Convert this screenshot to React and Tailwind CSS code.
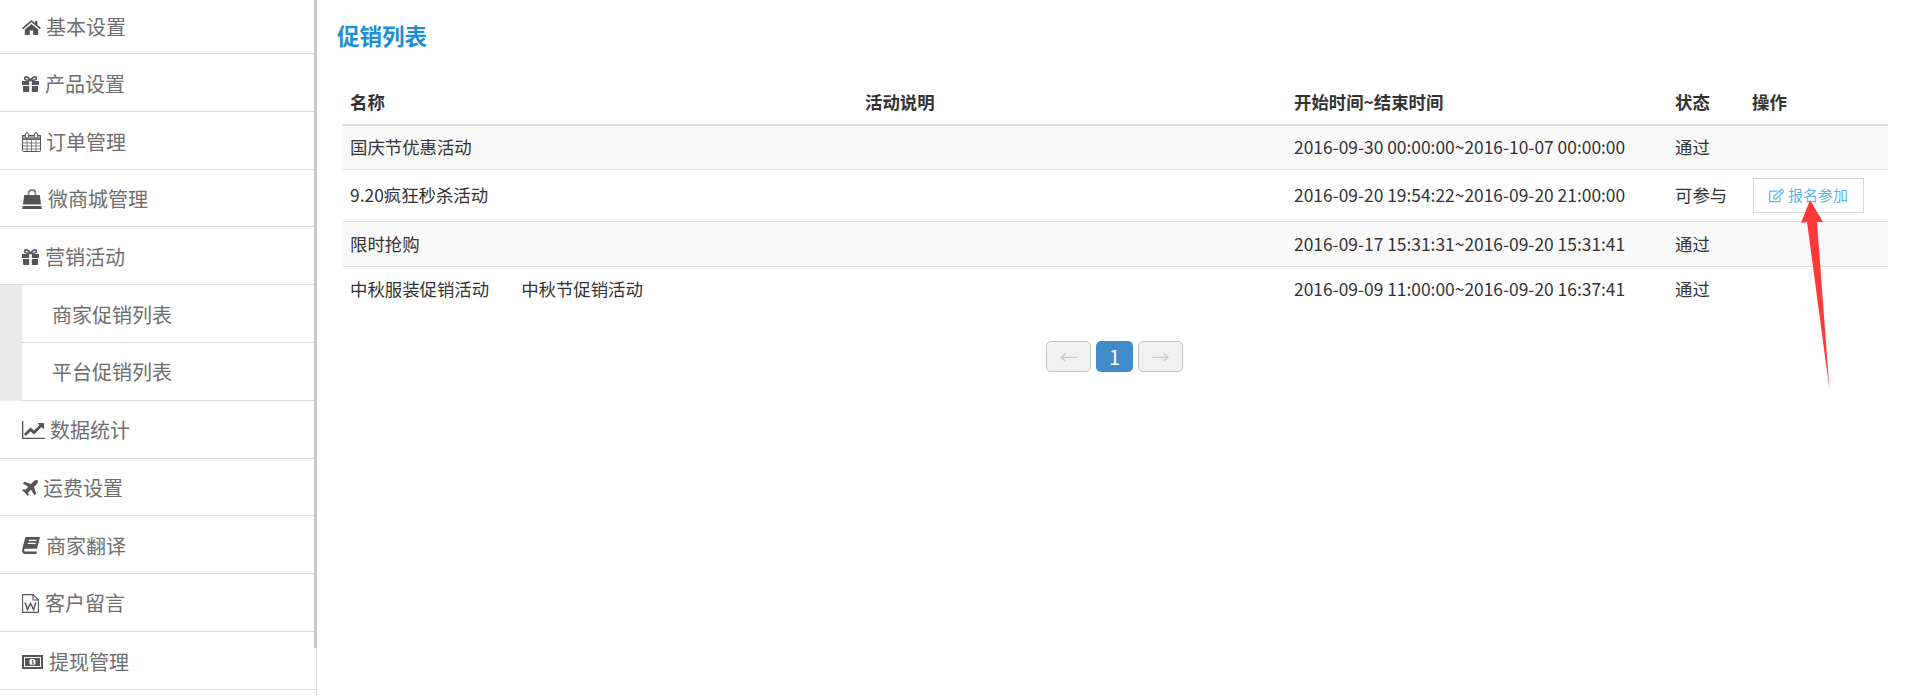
import React from 'react';
import { FaRegEdit } from 'react-icons/fa';

const F = { fontFamily: '"Noto Sans CJK SC", "Noto Sans", sans-serif' };

const HomeIcon = () => (
  <svg width="19" height="15" viewBox="0 0 19 15" fill="currentColor">
    <path d="M9.5 0 L13 2.9 V1 H15.4 V4.9 L19 7.9 L17.9 9.2 L9.5 2.3 L1.1 9.2 L0 7.9 Z" />
    <path d="M9.5 3.9 L16.2 9.4 V15 H11.2 V10.4 H7.8 V15 H2.8 V9.4 Z" />
  </svg>
);
const GiftIcon = () => (
  <svg width="17" height="16" viewBox="0 0 17 16">
    <path d="M0 5 H7.2 V9 H0 Z M9.8 5 H17 V9 H9.8 Z M1 10 H7.2 V16 H2 Q1 16 1 15 Z M9.8 10 H16 V15 Q16 16 15 16 H9.8 Z" fill="currentColor" />
    <path d="M8.5 4.2 C6 0 2.6 0.2 2.6 2.4 C2.6 4.2 5.5 4.2 8.5 4.2 C11.5 4.2 14.4 4.2 14.4 2.4 C14.4 0.2 11 0 8.5 4.2 Z" fill="none" stroke="currentColor" strokeWidth="1.6" />
  </svg>
);
const CalendarIcon = () => (
  <svg width="19" height="20" viewBox="0 0 19 20" fill="none" stroke="currentColor" strokeWidth="1">
    <rect x="0.5" y="3.5" width="18" height="16" rx="1" />
    <path d="M1 7.5 H18 M1 11 H18 M1 14 H18 M1 17 H18" strokeOpacity="0.7" />
    <path d="M5 8 V19 M9.5 8 V19 M14 8 V19" strokeOpacity="0.7" />
    <rect x="0.5" y="3.5" width="18" height="3.5" fill="currentColor" fillOpacity="0.55" />
    <rect x="3.5" y="0.7" width="3" height="5.5" rx="1.5" fill="#ffffff" />
    <rect x="12.5" y="0.7" width="3" height="5.5" rx="1.5" fill="#ffffff" />
  </svg>
);
const BagIcon = () => (
  <svg width="20" height="20" viewBox="0 0 20 20">
    <path d="M2.2 6 H17.8 L19 15.5 H1 Z M0.8 17 H19.2 L20 20 H0 Z" fill="currentColor" />
    <path d="M6.5 9 V4.5 C6.5 0 13.5 0 13.5 4.5 V9" fill="none" stroke="currentColor" strokeWidth="1.6" />
    <path d="M6.5 6 V4.5 C6.5 1 13.5 1 13.5 4.5 V6" fill="none" stroke="#ffffff" strokeWidth="0.5" />
  </svg>
);
const ChartIcon = () => (
  <svg width="23" height="18" viewBox="0 0 23 18">
    <path d="M0 0 H1.3 V16.7 H23 V18 H0 Z" fill="currentColor" />
    <path d="M3 14 L8.5 8.5 L12 11.5 L19 4.5" fill="none" stroke="currentColor" strokeWidth="2.8" />
    <path d="M15.5 2 H22 V8.5 Z" fill="currentColor" />
  </svg>
);
const PlaneIcon = () => (
  <svg width="16" height="16" viewBox="0 0 16 16" fill="currentColor">
    <path d="M15.6 0.4 C14.6 -0.4 12.6 0.4 11.4 1.6 L9 4 L2.4 1.8 L0.8 3.4 L6.2 6.8 L3.6 9.6 L1.2 9.2 L0 10.4 L3 12.6 L5.4 16 L6.6 14.8 L6.2 12.4 L9 9.8 L12.6 15.2 L14.2 13.6 L12 7 L14.4 4.6 C15.6 3.4 16.4 1.4 15.6 0.4 Z" />
  </svg>
);
const BookIcon = () => (
  <svg width="18" height="17" viewBox="0 0 18 17">
    <path d="M4.5 0 H18 L15 11.8 H3.2 C1.8 11.8 1.8 14.6 3.4 14.6 H15 L14.4 17 H2.8 C0.5 17 -0.4 14.6 0.2 12.4 L3 1.5 C3.2 0.6 3.8 0 4.5 0 Z" fill="currentColor" />
    <path d="M6.6 3.4 H14.6 M5.8 6.4 H13.8" stroke="#ffffff" strokeWidth="1.2" />
  </svg>
);
const WordIcon = () => (
  <svg width="17" height="19" viewBox="0 0 17 19" fill="none" stroke="currentColor" strokeWidth="1.1">
    <path d="M0.6 0.6 H11 L16.4 6 V18.4 H0.6 Z" />
    <path d="M11 0.6 V6 H16.4" />
    <path d="M3.2 8.5 L5.4 15.5 L8.5 9.5 L11.6 15.5 L13.8 8.5" strokeWidth="1.5" />
  </svg>
);
const MoneyIcon = () => (
  <svg width="21" height="14" viewBox="0 0 21 14">
    <path fillRule="evenodd" d="M0 0 H21 V14 H0 Z M2 2 V12 H19 V2 Z" fill="currentColor" />
    <path fillRule="evenodd" d="M3 3 H18 V11 H3 Z M10.5 3.8 A3.2 3.2 0 1 0 10.5 10.2 A3.2 3.2 0 1 0 10.5 3.8 Z" fill="currentColor" />
    <path d="M10.8 5 V9 M9.6 9 H12 M9.8 6 L10.8 5" stroke="currentColor" strokeWidth="1" fill="none" />
  </svg>
);

const menu = [
  { label: '基本设置', Icon: HomeIcon, ml: 'ml-[5px]', pt: 'pt-[1px]' },
  { label: '产品设置', Icon: GiftIcon, ml: 'ml-[6px]', pt: 'pt-[3px]' },
  { label: '订单管理', Icon: CalendarIcon, ml: 'ml-[5px]', pt: 'pt-[3px]' },
  { label: '微商城管理', Icon: BagIcon, ml: 'ml-[6px]', pt: 'pt-[3px]' },
  { label: '营销活动', Icon: GiftIcon, ml: 'ml-[6px]', pt: 'pt-[2px]' },
  { label: '数据统计', Icon: ChartIcon, ml: 'ml-[5px]', pt: 'pt-[2px]' },
  { label: '运费设置', Icon: PlaneIcon, ml: 'ml-[5px]', pt: 'pt-[3px]' },
  { label: '商家翻译', Icon: BookIcon, ml: 'ml-[6px]', pt: 'pt-[2px]' },
  { label: '客户留言', Icon: WordIcon, ml: 'ml-[6px]', pt: 'pt-[1px]' },
  { label: '提现管理', Icon: MoneyIcon, ml: 'ml-[6px]', pt: 'pt-[3px]' },
];
menu[4].open = true;

const rows = [
  { name: ['国庆节优惠活动'], time: '2016-09-30 00:00:00~2016-10-07 00:00:00', status: '通过', h: 'h-[44px]', border: true, striped: true },
  { name: ['9.20疯狂秒杀活动'], time: '2016-09-20 19:54:22~2016-09-20 21:00:00', status: '可参与', h: 'h-[52px]', border: true, action: true },
  { name: ['限时抢购'], time: '2016-09-17 15:31:31~2016-09-20 15:31:41', status: '通过', h: 'h-[45px]', border: true, striped: true, pt: 'pt-[2px]' },
  { name: ['中秋服装促销活动', '中秋节促销活动'], time: '2016-09-09 11:00:00~2016-09-20 16:37:41', status: '通过', h: 'h-[46px]' },
];

function MenuRow({ item, first }) {
  const { Icon } = item;
  return (
    <div className={`flex items-center pl-[22px] border-b border-[#dddddd] text-[20px] text-[#6e6e6e] ${item.pt} ${first ? 'h-[54px]' : 'h-[57.8px]'}`}>
      <span className="flex shrink-0 text-[#555555]">
        <Icon />
      </span>
      <span className={item.ml}>{item.label}</span>
    </div>
  );
}

function SubRow({ label }) {
  return (
    <div className="h-[57.8px] ml-[22px] pl-[30px] pt-[2px] flex items-center bg-white border-b border-[#dddddd] text-[20px] text-[#6e6e6e]">
      {label}
    </div>
  );
}

export default function App() {
  return (
    <div className="relative flex w-[1910px] h-[696px] overflow-hidden bg-white" style={F}>
      <aside className="relative w-[317px] shrink-0 border-r border-[#dddddd]">
        {menu.map((m, i) => (
          <React.Fragment key={m.label}>
            <MenuRow item={m} first={i === 0} />
            {m.open && (
              <div className="bg-[#ebebeb]">
                <SubRow label="商家促销列表" />
                <SubRow label="平台促销列表" />
              </div>
            )}
          </React.Fragment>
        ))}
        <div className="absolute top-0 left-[314px] w-[3px] h-[648px] bg-[#c8c8c8]" />
      </aside>

      <main className="flex-1 pl-[20px] pr-[22px]">
        <h1 className="mt-[19px] h-[32px] leading-[32px] text-[22.5px] font-bold text-[#1a8fd6]">促销列表</h1>
        <div className="ml-[6px] mt-[29px]">
          <table className="w-[1545px] table-fixed border-collapse text-[#333333] text-[17.4px]">
            <colgroup>
              <col className="w-[515px]" />
              <col className="w-[428px]" />
              <col className="w-[382px]" />
              <col className="w-[77px]" />
              <col className="w-[143px]" />
            </colgroup>
            <thead>
              <tr className="h-[45px] border-b-2 border-[#dddddd] text-left">
                <th className="pl-[7px] font-bold">名称</th>
                <th className="pl-[7px] font-bold">活动说明</th>
                <th className="pl-[8px] font-bold">开始时间~结束时间</th>
                <th className="pl-[7px] font-bold">状态</th>
                <th className="pl-[7px] font-bold">操作</th>
              </tr>
            </thead>
            <tbody>
              {rows.map((r) => (
                <tr key={r.time} className={`${r.h} ${r.border ? 'border-b border-[#dddddd]' : ''} ${r.striped ? 'bg-[#f9f9f9]' : ''}`}>
                  <td className={`pl-[7px] ${r.pt || ''}`}>
                    <span className="flex gap-[32px]">
                      {r.name.map((n) => <span key={n}>{n}</span>)}
                    </span>
                  </td>
                  <td />
                  <td className={`pl-[8px] whitespace-nowrap ${r.pt || ''}`}>{r.time}</td>
                  <td className={`pl-[7px] ${r.pt || ''}`}>{r.status}</td>
                  <td className="pl-[8px]">
                    {r.action && (
                      <button className="w-[111px] h-[35px] flex items-center justify-center gap-[4px] bg-white border border-[#d9d9d9] text-[15px] text-[#5cb5f2]">
                        <FaRegEdit className="w-[15px] h-[15px]" />
                        报名参加
                      </button>
                    )}
                  </td>
                </tr>
              ))}
            </tbody>
          </table>
          <div className="flex justify-center gap-[5px] mt-[29px] mr-[2px]">
            <span className="w-[45px] h-[31px] flex items-center justify-center rounded-[5px] border border-[#c4c4c4] bg-[#f1f1f1] text-[#c8c8c8] text-[18px]">←</span>
            <span className="w-[37px] h-[31px] flex items-center justify-center rounded-[5px] bg-[#428bca] text-white text-[20px]">1</span>
            <span className="w-[45px] h-[31px] flex items-center justify-center rounded-[5px] border border-[#c4c4c4] bg-[#f1f1f1] text-[#c8c8c8] text-[18px]">→</span>
          </div>
        </div>
      </main>

      <svg className="absolute left-0 top-0 pointer-events-none" width="1910" height="696">
        <polygon points="1810,200 1823,222 1817,222 1829.5,390 1807,222 1801,223" fill="#ff3838" />
      </svg>
    </div>
  );
}
